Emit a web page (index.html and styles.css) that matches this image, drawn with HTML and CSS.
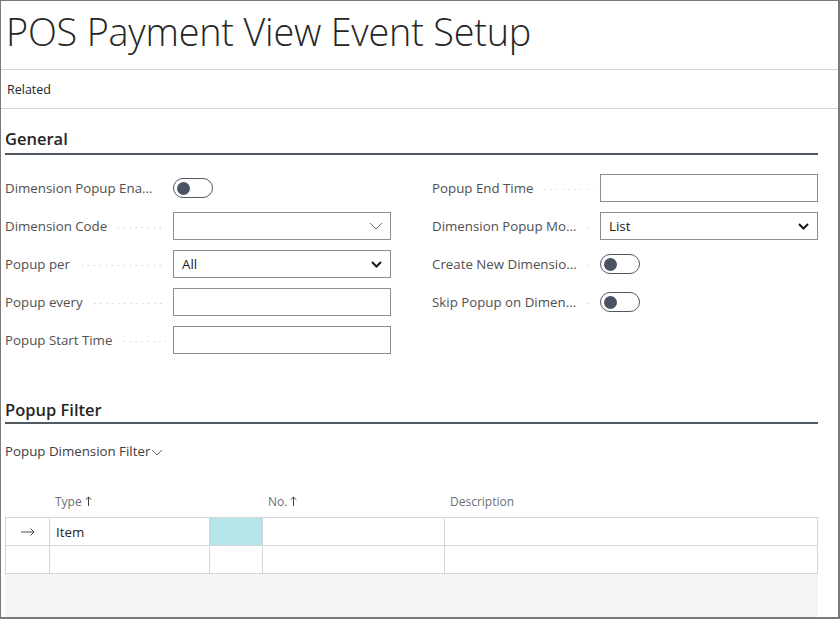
FILE: index.html
```html
<!DOCTYPE html>
<html>
<head>
<meta charset="utf-8">
<link rel="stylesheet" href="styles.css">
</head>
<body>
<div class="frame">
  <header class="titlebar">
    <h1 class="title">POS Payment View Event Setup</h1>
  </header>
  <nav class="actionbar"><span class="action">Related</span></nav>
  <main class="content">
    <section class="group">
      <h2 class="group-title">General</h2>
      <div class="fields">
        <div class="col">
          <div class="field">
            <span class="label">Dimension Popup Ena...</span><span class="leader"></span>
            <span class="toggle"><span class="knob"></span></span>
          </div>
          <div class="field">
            <span class="label">Dimension Code</span><span class="leader"></span>
            <div class="input combo"><span class="val"></span>
              <svg class="chev-thin" width="14" height="8" viewBox="0 0 14 8"><path d="M1 1 L7 7 L13 1" fill="none" stroke="#6b6b6b" stroke-width="1"/></svg>
            </div>
          </div>
          <div class="field">
            <span class="label">Popup per</span><span class="leader"></span>
            <div class="input select"><span class="val">All</span>
              <svg class="chev-bold" width="11" height="7" viewBox="0 0 11 7"><path d="M1 1 L5.5 5.5 L10 1" fill="none" stroke="#1a1a1a" stroke-width="2"/></svg>
            </div>
          </div>
          <div class="field">
            <span class="label">Popup every</span><span class="leader"></span>
            <div class="input"></div>
          </div>
          <div class="field">
            <span class="label">Popup Start Time</span><span class="leader"></span>
            <div class="input"></div>
          </div>
        </div>
        <div class="col">
          <div class="field">
            <span class="label">Popup End Time</span><span class="leader"></span>
            <div class="input"></div>
          </div>
          <div class="field">
            <span class="label">Dimension Popup Mo...</span><span class="leader"></span>
            <div class="input select"><span class="val">List</span>
              <svg class="chev-bold" width="11" height="7" viewBox="0 0 11 7"><path d="M1 1 L5.5 5.5 L10 1" fill="none" stroke="#1a1a1a" stroke-width="2"/></svg>
            </div>
          </div>
          <div class="field">
            <span class="label">Create New Dimensio...</span><span class="leader"></span>
            <span class="toggle"><span class="knob"></span></span>
          </div>
          <div class="field">
            <span class="label">Skip Popup on Dimen...</span><span class="leader"></span>
            <span class="toggle"><span class="knob"></span></span>
          </div>
        </div>
      </div>
    </section>

    <section class="group group-filter">
      <h2 class="group-title">Popup Filter</h2>
      <div class="part-title">Popup Dimension Filter<svg class="part-chev" width="12" height="7" viewBox="0 0 12 7"><path d="M1 1 L6 6 L11 1" fill="none" stroke="#6b6b6b" stroke-width="1"/></svg></div>
      <div class="grid">
        <div class="grid-head">
          <span class="c c-sel"></span>
          <span class="c c-type">Type<svg class="arrow" width="7" height="10" viewBox="0 0 7 10"><path d="M3.5 10 V1 M0.8 3.7 L3.5 1 L6.2 3.7" fill="none" stroke="#404040" stroke-width="1"/></svg></span>
          <span class="c c-code"></span>
          <span class="c c-no">No.<svg class="arrow" width="7" height="10" viewBox="0 0 7 10"><path d="M3.5 10 V1 M0.8 3.7 L3.5 1 L6.2 3.7" fill="none" stroke="#404040" stroke-width="1"/></svg></span>
          <span class="c c-desc">Description</span>
        </div>
        <div class="grid-row">
          <span class="c c-sel"><svg width="14" height="8" viewBox="0 0 14 8"><path d="M0 4 H13 M9.5 0.5 L13 4 L9.5 7.5" fill="none" stroke="#505050" stroke-width="1"/></svg></span>
          <span class="c c-type">Item</span>
          <span class="c c-code active"></span>
          <span class="c c-no"></span>
          <span class="c c-desc"></span>
        </div>
        <div class="grid-row">
          <span class="c c-sel"></span>
          <span class="c c-type"></span>
          <span class="c c-code"></span>
          <span class="c c-no"></span>
          <span class="c c-desc"></span>
        </div>
        <div class="grid-fill"></div>
      </div>
    </section>
  </main>
</div>
</body>
</html>
```

FILE: styles.css
```css
* { box-sizing: border-box; margin: 0; padding: 0; }
html, body { width: 840px; height: 619px; overflow: hidden; background: #fff; }
body {
  font-family: "Open Sans", "Noto Sans", sans-serif;
  color: #212121;
}
.frame {
  width: 840px;
  height: 619px;
  border: 1px solid #7a7a7a;
  border-right-width: 2px;
  border-bottom-width: 2px;
  display: flex;
  flex-direction: column;
  overflow: hidden;
}
.titlebar {
  flex: none;
  height: 69px;
  border-bottom: 1px solid #d6d6d6;
  padding-left: 5px;
}
.title {
  font-weight: 300;
  font-size: 37.8px;
  line-height: 62px;
  letter-spacing: -0.2px;
  color: #262626;
}
.actionbar {
  flex: none;
  height: 39px;
  border-bottom: 1px solid #d6d6d6;
  display: flex;
  align-items: center;
  padding-left: 6px;
  font-size: 12.5px;
  color: #262626;
}
.content {
  flex: 1;
  min-height: 0;
  padding: 0 20px 0 4px;
  display: flex;
  flex-direction: column;
}
.group { flex: none; }
.group-title {
  font-size: 16.5px;
  font-weight: 600;
  color: #262626;
  height: 46px;
  padding-top: 17px;
  line-height: 26px;
  border-bottom: 2px solid #505862;
}
.fields {
  display: grid;
  grid-template-columns: 386px 386px;
  column-gap: 41px;
  padding-top: 14px;
}
.field {
  display: flex;
  align-items: center;
  height: 38px;
}
.label {
  font-size: 13.3px;
  color: #505050;
  white-space: nowrap;
  flex: none;
}
.leader {
  flex: 1;
  height: 1px;
  margin: 2px 7px 0 8px;
  background-image: linear-gradient(to right, #c4c4c4 1px, transparent 1px);
  background-size: 6px 1px;
  background-repeat: repeat-x;
  background-position: right center;
}
.input {
  width: 218px;
  height: 28px;
  border: 1px solid #8a8d93;
  flex: none;
  display: flex;
  align-items: center;
  justify-content: space-between;
  padding: 0 8px 0 8px;
  font-size: 13.3px;
  color: #1a1a1a;
}
.input.combo { padding-right: 7px; }
.toggle {
  width: 40px;
  height: 20px;
  border: 1px solid #505862;
  border-radius: 10px;
  flex: none;
  margin-right: 178px;
  display: flex;
  align-items: center;
  padding-left: 3px;
}
.knob {
  width: 13px;
  height: 13px;
  border-radius: 50%;
  background: #4b5363;
}
.group-filter {
  margin-top: 21px;
  flex: 1;
  min-height: 0;
  display: flex;
  flex-direction: column;
}
.group-filter .group-title { height: 44px; flex: none; }
.part-title {
  flex: none;
  font-size: 13.3px;
  color: #404040;
  height: 56px;
  padding-top: 17px;
  display: flex;
  align-items: flex-start;
  line-height: 20px;
}
.part-chev { margin-top: 8px; margin-left: 1px; }
.grid { display: flex; flex-direction: column; flex: 1; min-height: 0; }
.grid-head, .grid-row {
  flex: none;
  display: grid;
  grid-template-columns: 43px 160px 53px 182px 1fr;
}
.grid-head {
  height: 37px;
  padding-top: 6px;
  padding-left: 1px;
  align-items: center;
  font-size: 12px;
  color: #6b6f76;
}
.grid-head .c { padding-left: 6px; display: flex; align-items: center; }
.grid-head .arrow { margin-left: 3px; margin-top: -1px; }
.grid-row {
  height: 28px;
  border-left: 1px solid #d4d6da;
  border-right: 1px solid #d4d6da;
  border-top: 1px solid #d4d6da;
  font-size: 13.3px;
  color: #262626;
}
.grid-row .c {
  border-left: 1px solid #d4d6da;
  display: flex;
  align-items: center;
  padding-left: 6px;
}
.grid-row .c.c-sel { border-left: none; justify-content: center; padding-left: 0; }
.grid-row .active { background: #b7e6ea; }
.grid-fill {
  flex: 1;
  background: #f4f5f7;
  border-top: 1px solid #d4d6da;
}
```
